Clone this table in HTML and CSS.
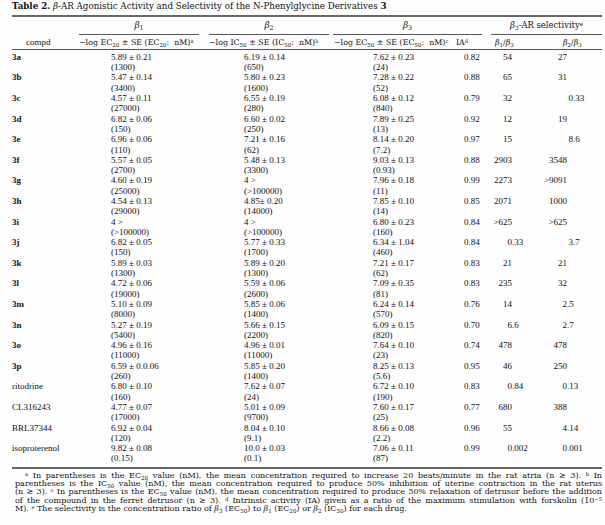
FILE: index.html
```html
<!DOCTYPE html>
<html lang="en">
<head>
<meta charset="utf-8">
<title>Table 2</title>
<link rel="stylesheet" href="styles.css">
</head>
<body>
<div class="page">
  <div class="title"><b>Table 2.</b> <i>β</i>-AR Agonistic Activity and Selectivity of the N-Phenylglycine Derivatives <b>3</b></div>
  <div class="tbl">
    <table>
      <colgroup>
        <col class="w1"><col class="w2"><col class="w3"><col class="w4"><col class="w5"><col class="w6"><col class="w7">
      </colgroup>
      <thead>
        <tr class="grp">
          <th></th>
          <th><div class="g g1"><i>β</i><sub>1</sub></div></th>
          <th><div class="g g2"><i>β</i><sub>2</sub></div></th>
          <th colspan="2"><div class="g g3"><i>β</i><sub>3</sub></div></th>
          <th colspan="2"><div class="g g4"><i>β</i><sub>3</sub>-AR selectivity<sup>e</sup></div></th>
        </tr>
        <tr class="sub">
          <th class="h1">compd</th>
          <th class="h2">−log EC<sub>20</sub> ± SE (EC<sub>20</sub>:&nbsp; nM)<sup>a</sup></th>
          <th class="h3">−log IC<sub>50</sub> ± SE (IC<sub>50</sub>:&nbsp; nM)<sup>b</sup></th>
          <th class="h4">−log EC<sub>50</sub> ± SE (EC<sub>50</sub>:&nbsp; nM)<sup>c</sup></th>
          <th class="h5">IA<sup>d</sup></th>
          <th class="h6"><i>β</i><sub>1</sub>/<i>β</i><sub>3</sub></th>
          <th class="h7"><i>β</i><sub>2</sub>/<i>β</i><sub>3</sub></th>
        </tr>
      </thead>
      <tbody>
        <tr><td class="c"><b>3a</b></td><td class="v1">5.89 ± 0.21<br>(1300)</td><td class="v2">6.19 ± 0.14<br>(650)</td><td class="v3">7.62 ± 0.23<br>(24)</td><td class="ia">0.82</td><td class="r1"><span class="ip">54</span></td><td class="r2"><span class="ip">27</span></td></tr>
        <tr><td class="c"><b>3b</b></td><td class="v1">5.47 ± 0.14<br>(3400)</td><td class="v2">5.80 ± 0.23<br>(1600)</td><td class="v3">7.28 ± 0.22<br>(52)</td><td class="ia">0.88</td><td class="r1"><span class="ip">65</span></td><td class="r2"><span class="ip">31</span></td></tr>
        <tr><td class="c"><b>3c</b></td><td class="v1">4.57 ± 0.11<br>(27000)</td><td class="v2">6.55 ± 0.19<br>(280)</td><td class="v3">6.08 ± 0.12<br>(840)</td><td class="ia">0.79</td><td class="r1"><span class="ip">32</span></td><td class="r2 sh"><span class="ip">0</span>.33</td></tr>
        <tr><td class="c"><b>3d</b></td><td class="v1">6.82 ± 0.06<br>(150)</td><td class="v2">6.60 ± 0.02<br>(250)</td><td class="v3">7.89 ± 0.25<br>(13)</td><td class="ia">0.92</td><td class="r1"><span class="ip">12</span></td><td class="r2"><span class="ip">19</span></td></tr>
        <tr><td class="c"><b>3e</b></td><td class="v1">6.96 ± 0.06<br>(110)</td><td class="v2">7.21 ± 0.16<br>(62)</td><td class="v3">8.14 ± 0.20<br>(7.2)</td><td class="ia">0.97</td><td class="r1"><span class="ip">15</span></td><td class="r2 sh"><span class="ip">8</span>.6</td></tr>
        <tr><td class="c"><b>3f</b></td><td class="v1">5.57 ± 0.05<br>(2700)</td><td class="v2">5.48 ± 0.13<br>(3300)</td><td class="v3">9.03 ± 0.13<br>(0.93)</td><td class="ia">0.88</td><td class="r1"><span class="ip">2903</span></td><td class="r2"><span class="ip">3548</span></td></tr>
        <tr><td class="c"><b>3g</b></td><td class="v1">4.60 ± 0.19<br>(25000)</td><td class="v2">4 &gt;<br>(&gt;100000)</td><td class="v3">7.96 ± 0.18<br>(11)</td><td class="ia">0.99</td><td class="r1"><span class="ip">2273</span></td><td class="r2"><span class="ip">&gt;9091</span></td></tr>
        <tr><td class="c"><b>3h</b></td><td class="v1">4.54 ± 0.13<br>(29000)</td><td class="v2">4.85± 0.20<br>(14000)</td><td class="v3">7.85 ± 0.10<br>(14)</td><td class="ia">0.85</td><td class="r1"><span class="ip">2071</span></td><td class="r2"><span class="ip">1000</span></td></tr>
        <tr><td class="c"><b>3i</b></td><td class="v1">4 &gt;<br>(&gt;100000)</td><td class="v2">4 &gt;<br>(&gt;100000)</td><td class="v3">6.80 ± 0.23<br>(160)</td><td class="ia">0.84</td><td class="r1"><span class="ip">&gt;625</span></td><td class="r2"><span class="ip">&gt;625</span></td></tr>
        <tr><td class="c"><b>3j</b></td><td class="v1">6.82 ± 0.05<br>(150)</td><td class="v2">5.77 ± 0.33<br>(1700)</td><td class="v3">6.34 ± 1.04<br>(460)</td><td class="ia">0.84</td><td class="r1"><span class="ip">0</span>.33</td><td class="r2 sh"><span class="ip">3</span>.7</td></tr>
        <tr><td class="c"><b>3k</b></td><td class="v1">5.89 ± 0.03<br>(1300)</td><td class="v2">5.89 ± 0.20<br>(1300)</td><td class="v3">7.21 ± 0.17<br>(62)</td><td class="ia">0.83</td><td class="r1"><span class="ip">21</span></td><td class="r2"><span class="ip">21</span></td></tr>
        <tr><td class="c"><b>3l</b></td><td class="v1">4.72 ± 0.06<br>(19000)</td><td class="v2">5.59 ± 0.06<br>(2600)</td><td class="v3">7.09 ± 0.35<br>(81)</td><td class="ia">0.83</td><td class="r1"><span class="ip">235</span></td><td class="r2"><span class="ip">32</span></td></tr>
        <tr><td class="c"><b>3m</b></td><td class="v1">5.10 ± 0.09<br>(8000)</td><td class="v2">5.85 ± 0.06<br>(1400)</td><td class="v3">6.24 ± 0.14<br>(570)</td><td class="ia">0.76</td><td class="r1"><span class="ip">14</span></td><td class="r2"><span class="ip">2</span>.5</td></tr>
        <tr><td class="c"><b>3n</b></td><td class="v1">5.27 ± 0.19<br>(5400)</td><td class="v2">5.66 ± 0.15<br>(2200)</td><td class="v3">6.09 ± 0.15<br>(820)</td><td class="ia">0.70</td><td class="r1"><span class="ip">6</span>.6</td><td class="r2"><span class="ip">2</span>.7</td></tr>
        <tr><td class="c"><b>3o</b></td><td class="v1">4.96 ± 0.16<br>(11000)</td><td class="v2">4.96 ± 0.01<br>(11000)</td><td class="v3">7.64 ± 0.10<br>(23)</td><td class="ia">0.74</td><td class="r1"><span class="ip">478</span></td><td class="r2"><span class="ip">478</span></td></tr>
        <tr><td class="c"><b>3p</b></td><td class="v1">6.59 ± 0.0.06<br>(260)</td><td class="v2">5.85 ± 0.20<br>(1400)</td><td class="v3">8.25 ± 0.13<br>(5.6)</td><td class="ia">0.95</td><td class="r1"><span class="ip">46</span></td><td class="r2"><span class="ip">250</span></td></tr>
        <tr><td class="c">ritodrine</td><td class="v1">6.80 ± 0.10<br>(160)</td><td class="v2">7.62 ± 0.07<br>(24)</td><td class="v3">6.72 ± 0.10<br>(190)</td><td class="ia">0.83</td><td class="r1"><span class="ip">0</span>.84</td><td class="r2"><span class="ip">0</span>.13</td></tr>
        <tr><td class="c">CL316243</td><td class="v1">4.77 ± 0.07<br>(17000)</td><td class="v2">5.01 ± 0.09<br>(9700)</td><td class="v3">7.60 ± 0.17<br>(25)</td><td class="ia">0.77</td><td class="r1"><span class="ip">680</span></td><td class="r2"><span class="ip">388</span></td></tr>
        <tr><td class="c">BRL37344</td><td class="v1">6.92 ± 0.04<br>(120)</td><td class="v2">8.04 ± 0.10<br>(9.1)</td><td class="v3">8.66 ± 0.08<br>(2.2)</td><td class="ia">0.96</td><td class="r1"><span class="ip">55</span></td><td class="r2"><span class="ip">4</span>.14</td></tr>
        <tr><td class="c">isoproterenol</td><td class="v1">9.82 ± 0.08<br>(0.15)</td><td class="v2">10.0 ± 0.03<br>(0.1)</td><td class="v3">7.06 ± 0.11<br>(87)</td><td class="ia">0.99</td><td class="r1"><span class="ip">0</span>.002</td><td class="r2"><span class="ip">0</span>.001</td></tr>
      </tbody>
    </table>
  </div>
  <div class="notes">
    <div class="ln ln1"><sup>a</sup> In parentheses is the EC<sub>20</sub> value (nM), the mean concentration required to increase 20 beats/minute in the rat atria (n ≥ 3). <sup>b</sup> In</div>
    <div class="ln">parentheses is the IC<sub>50</sub> value (nM), the mean concentration required to produce 50% inhibition of uterine contraction in the rat uterus</div>
    <div class="ln">(n ≥ 3). <sup>c</sup> In parentheses is the EC<sub>50</sub> value (nM), the mean concentration required to produce 50% relaxation of detrusor before the addition</div>
    <div class="ln">of the compound in the ferret detrusor (n ≥ 3). <sup>d</sup> Intrinsic activity (IA) given as a ratio of the maximum stimulation with forskolin (10<sup>−5</sup></div>
    <div class="last">M). <sup>e</sup> The selectivity is the concentration ratio of <i>β</i><sub>3</sub> (EC<sub>50</sub>) to <i>β</i><sub>1</sub> (EC<sub>20</sub>) or <i>β</i><sub>2</sub> (IC<sub>50</sub>) for each drug.</div>
  </div>
</div>
</body>
</html>
```

FILE: styles.css
```css
html, body {
  margin: 0;
  padding: 0;
  background: #fdfdfd;
}

body {
  width: 605px;
  height: 525px;
  overflow: hidden;
  color: #111;
  font-family: "DejaVu Serif", serif;
}

.title {
  height: 15px;
  padding-left: 12px;
  font-size: 8.7px;
  line-height: 12px;
  white-space: nowrap;
}

.tbl {
  width: 590px;
  margin-left: 12px;
  border-top: 2px solid #666;
  border-bottom: 2px solid #666;
}

table {
  width: 590px;
  border-collapse: separate;
  border-spacing: 0;
  table-layout: fixed;
}

.w1 { width: 67px; }
.w2 { width: 125px; }
.w3 { width: 127px; }
.w4 { width: 119px; }
.w5 { width: 37px; }
.w6 { width: 53px; }
.w7 { width: 62px; }

th {
  padding: 0;
  font-weight: normal;
  font-size: 7.9px;
  text-align: left;
  white-space: nowrap;
}

sub {
  font-size: 0.7em;
  line-height: 0;
  vertical-align: -0.3em;
}

sup {
  font-size: 0.65em;
  line-height: 0;
  vertical-align: 0.45em;
}

.grp th {
  line-height: 11px;
}

.g {
  padding: 3px 0 2.5px;
  border-bottom: 1px solid #555;
  text-align: center;
  font-size: 9px;
}

.g1 { margin-right: 5px; }
.g2 { margin-left: 5px; margin-right: 2px; }
.g3 { margin-left: 2px; margin-right: 5px; }
.g4 { margin-left: 4px; font-size: 8.4px; }

.sub th {
  padding: 2px 0 1px;
  line-height: 11px;
  border-bottom: 1px solid #555;
}

.sub .h1 { padding-left: 14px; font-family: "Liberation Serif", serif; font-size: 9px; }
.sub .h3 { padding-left: 5px; }
.sub .h4 { padding-left: 3px; }
.sub .h5 { padding-left: 6px; }
.sub .h6 { padding-left: 8px; }
.sub .h7 { padding-left: 23px; }

td {
  padding: 0;
  font-family: "Liberation Serif", serif;
  font-size: 9px;
  line-height: 10.3px;
  vertical-align: top;
  white-space: nowrap;
}

tbody tr:first-child td { padding-top: 2.35px; }
tbody tr:last-child td { padding-bottom: 3.5px; }

.v1 { padding-left: 32px; }
.v2 { padding-left: 40px; }
.v3 { padding-left: 42px; }
.ia { padding-left: 14px; }

.ip {
  display: inline-block;
  text-align: right;
}

.r1 .ip { width: 25px; }
.r2 .ip { width: 27px; }
td.sh { padding-left: 6px; }

.notes {
  width: 587px;
  margin: 2.5px 0 0 15px;
  font-size: 8px;
  line-height: 8.3px;
}

.ln {
  text-align: justify;
  text-align-last: justify;
}

.ln1 { text-indent: 10px; }

.last {
  text-align: left;
}
```
